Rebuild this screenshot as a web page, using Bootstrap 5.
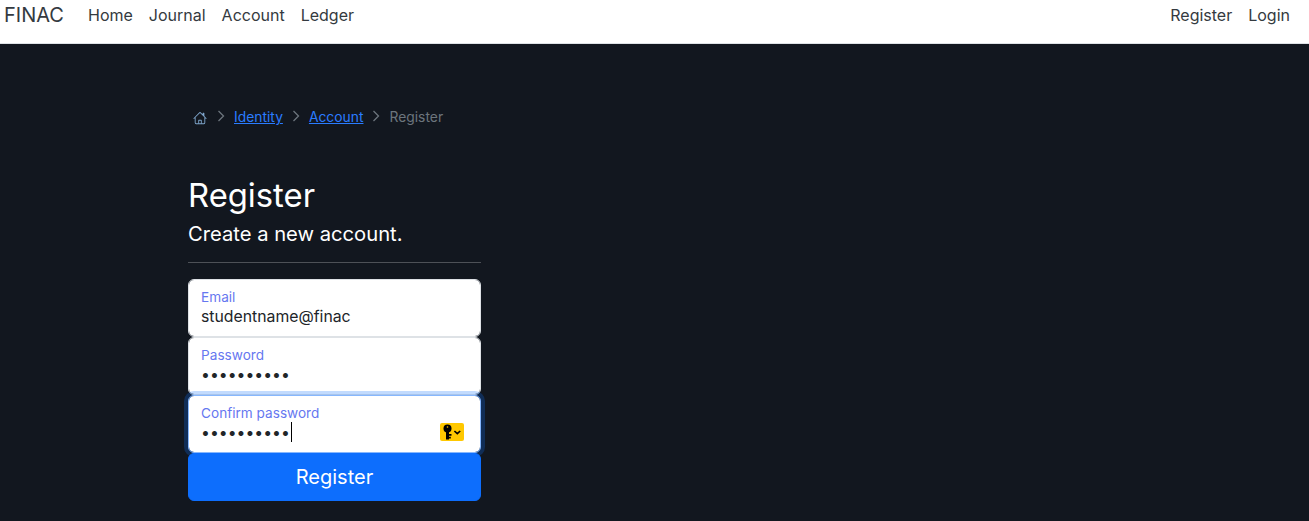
<!DOCTYPE html>
<html lang="en">
<head>
    <meta charset="UTF-8">
    <meta name="viewport" content="width=device-width, initial-scale=1.0">
    <title>Register - FINAC</title>
    <link href="https://cdn.jsdelivr.net/npm/bootstrap@5.3.0/dist/css/bootstrap.min.css" rel="stylesheet">
    <style>
        html, body {
            height: 100%;
        }
        body {
            background-color: #12171f;
            font-family: "Inter", "Liberation Sans", sans-serif;
            overflow: hidden;
        }
        .top-bar {
            height: 44px;
            padding: 0 4px;
            align-items: flex-start;
            background: #fff;
            border-bottom: 1px solid #dee2e6;
        }
        .top-bar .navbar-brand {
            font-size: 20px;
            line-height: 30px;
            padding: 0;
            margin-right: 16px;
            color: #343a40;
        }
        .top-bar .nav-link {
            font-size: 16px;
            line-height: 24px;
            padding: 3px 8px;
            color: #343a40;
        }
        .right-links {
            padding-right: 7px;
        }
        .page-wrap {
            width: 933px;
            margin: 0 auto;
            padding-top: 61px;
        }
        .crumbs {
            --bs-breadcrumb-divider: url("data:image/svg+xml,%3Csvg xmlns='http://www.w3.org/2000/svg' width='8' height='12'%3E%3Cpath d='M1.5 1l5 5-5 5' fill='none' stroke='%236c757d' stroke-width='1.3'/%3E%3C/svg%3E");
            --bs-breadcrumb-item-padding-x: 9px;
            --bs-breadcrumb-item-active-color: #6c757d;
            font-size: 13.85px;
            line-height: 24px;
            margin: 0 0 47px 5px;
        }
        .crumbs a {
            color: #2a7cff;
        }
        .home-icon {
            display: block;
            margin-top: 6px;
            margin-right: 1px;
            color: #7fa6cc;
        }
        .register-form {
            width: 293px;
        }
        .register-form h1 {
            font-size: 32.8px;
            line-height: 38px;
            font-weight: 400;
            color: #fff;
            margin: 0 0 8px;
        }
        .register-form h2 {
            font-size: 20.2px;
            line-height: 24px;
            font-weight: 400;
            color: #fff;
            margin: 0;
        }
        .register-form hr {
            margin: 16px 0;
            border-color: #fff;
            opacity: .25;
        }
        .register-form .form-control {
            color: #212529;
            font-size: 15.8px;
        }
        .register-form .form-floating > label {
            color: #6677f0;
            padding-left: 12px;
        }
        .register-form .form-floating > .form-control:not(:placeholder-shown) ~ label {
            color: #6677f0;
            opacity: 1;
        }
        .register-form .form-floating > .form-control {
            padding-left: 12px;
        }
        .confirm-field {
            z-index: 2;
        }
        .confirm-field .form-control {
            border-color: #86b7fe;
            box-shadow: 0 0 0 4px rgba(13, 110, 253, .25);
            caret-color: transparent;
        }
        .text-caret {
            position: absolute;
            left: 103px;
            top: 27px;
            width: 1px;
            height: 20px;
            background: #000;
            z-index: 3;
        }
        .key-badge {
            position: absolute;
            right: 17px;
            top: 28px;
            width: 24px;
            height: 18px;
            background: #ffc800;
            border-radius: 2px;
            z-index: 3;
        }
        .key-badge svg {
            display: block;
        }
        .submit-btn {
            position: relative;
            z-index: 3;
            height: 48px;
            font-size: 20px;
        }
    </style>
</head>
<body>
    <nav class="navbar navbar-expand top-bar">
        <a class="navbar-brand" href="#">FINAC</a>
        <ul class="navbar-nav me-auto">
            <li class="nav-item"><a class="nav-link" href="#">Home</a></li>
            <li class="nav-item"><a class="nav-link" href="#">Journal</a></li>
            <li class="nav-item"><a class="nav-link" href="#">Account</a></li>
            <li class="nav-item"><a class="nav-link" href="#">Ledger</a></li>
        </ul>
        <ul class="navbar-nav right-links">
            <li class="nav-item"><a class="nav-link" href="#">Register</a></li>
            <li class="nav-item"><a class="nav-link" href="#">Login</a></li>
        </ul>
    </nav>

    <main class="page-wrap">
        <ol class="breadcrumb crumbs">
            <li class="breadcrumb-item">
                <a href="#" aria-label="Home">
                    <svg class="home-icon" width="14" height="14" viewBox="0 0 16 16" fill="currentColor"><path d="M8.707 1.5a1 1 0 0 0-1.414 0L.646 8.146a.5.5 0 0 0 .708.708L2 8.207V13.5A1.5 1.5 0 0 0 3.5 15h9a1.5 1.5 0 0 0 1.5-1.5V8.207l.646.647a.5.5 0 0 0 .708-.708L13 5.793V2.5a.5.5 0 0 0-.5-.5h-1a.5.5 0 0 0-.5.5v1.293L8.707 1.5ZM13 7.207V13.5a.5.5 0 0 1-.5.5h-9a.5.5 0 0 1-.5-.5V7.207l5-5 5 5Z"/><path d="M6 14.5v-4a.5.5 0 0 1 .5-.5h3a.5.5 0 0 1 .5.5v4h-1v-3.5h-2v3.5H6Z"/></svg>
                </a>
            </li>
            <li class="breadcrumb-item"><a href="#">Identity</a></li>
            <li class="breadcrumb-item"><a href="#">Account</a></li>
            <li class="breadcrumb-item active" aria-current="page">Register</li>
        </ol>

        <form class="register-form">
            <h1>Register</h1>
            <h2>Create a new account.</h2>
            <hr>
            <div class="form-floating">
                <input type="email" class="form-control" id="regEmail" placeholder="name@example.com" value="studentname@finac">
                <label for="regEmail">Email</label>
            </div>
            <div class="form-floating">
                <input type="password" class="form-control" id="regPassword" placeholder="password" value="Student1!x">
                <label for="regPassword">Password</label>
            </div>
            <div class="form-floating confirm-field">
                <input type="password" class="form-control" id="regConfirm" placeholder="password" value="Student1!x">
                <label for="regConfirm">Confirm password</label>
                <span class="text-caret"></span>
                <span class="key-badge">
                    <svg width="24" height="18" viewBox="0 0 24 18"><circle cx="7.5" cy="5.5" r="4" fill="#000"/><circle cx="7.5" cy="4" r=".8" fill="#ffc800"/><path d="M6 8h3v8.5h-3zM9 11h2.5v1.7H9zM9 13.8h1.8v1.7H9z" fill="#000"/><path d="M14.4 8l2.9 2.7L20.2 8" fill="none" stroke="#000" stroke-width="1.7"/></svg>
                </span>
            </div>
            <button type="submit" class="btn btn-primary w-100 submit-btn">Register</button>
        </form>
    </main>

    <script src="https://cdn.jsdelivr.net/npm/bootstrap@5.3.0/dist/js/bootstrap.bundle.min.js"></script>
</body>
</html>
